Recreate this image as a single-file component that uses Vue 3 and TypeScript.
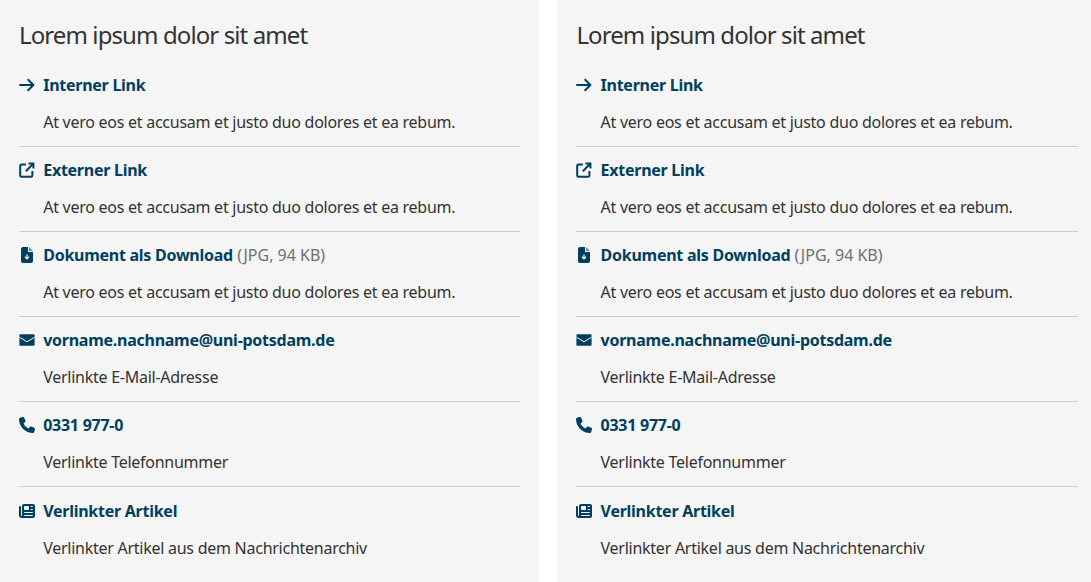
<script setup lang="ts">
interface Item { icon: string; title: string; meta?: string; desc: string }
const lorem = 'At vero eos et accusam et justo duo dolores et ea rebum.'
const items: Item[] = [
  { icon: 'arrow', title: 'Interner Link', desc: lorem },
  { icon: 'external', title: 'Externer Link', desc: lorem },
  { icon: 'file', title: 'Dokument als Download', meta: '(JPG, 94 KB)', desc: lorem },
  { icon: 'mail', title: 'vorname.nachname@uni-potsdam.de', desc: 'Verlinkte E-Mail-Adresse' },
  { icon: 'phone', title: '0331 977-0', desc: 'Verlinkte Telefonnummer' },
  { icon: 'news', title: 'Verlinkter Artikel', desc: 'Verlinkter Artikel aus dem Nachrichtenarchiv' },
]
const cards = [0, 1]
</script>

<template>
  <div class="page">
    <section v-for="c in cards" :key="c" class="card">
      <h2 class="heading">Lorem ipsum dolor sit amet</h2>
      <ul class="list">
        <li v-for="item in items" :key="item.title" class="item">
          <div class="title-row">
            <svg class="icon" viewBox="0 0 16 16" aria-hidden="true">
              <g v-if="item.icon === 'arrow'" fill="none" stroke="currentColor" stroke-width="2" stroke-linecap="round" stroke-linejoin="round">
                <path d="M1 8h13" /><path d="M9.2 2.8L14.4 8l-5.2 5.2" />
              </g>
              <g v-else-if="item.icon === 'external'" fill="none" stroke="currentColor" stroke-width="2">
                <path d="M7 2.6H2.6a1.4 1.4 0 0 0-1.4 1.4v9.4a1.4 1.4 0 0 0 1.4 1.4H12a1.4 1.4 0 0 0 1.4-1.4V9" />
                <path d="M6.8 9.2l7.4-7.4" /><path d="M9.4 1.6h5v5" />
              </g>
              <g v-else-if="item.icon === 'file'">
                <path fill="currentColor" transform="translate(2 0) scale(0.03125)" d="M0 64C0 28.7 28.7 0 64 0H224V128c0 17.7 14.3 32 32 32H384V448c0 35.3-28.7 64-64 64H64c-35.3 0-64-28.7-64-64V64z" />
                <path fill="currentColor" opacity=".6" transform="translate(2 0) scale(0.03125)" d="M384 128H256V0L384 128z" />
                <path fill="none" stroke="#f5f5f5" stroke-width="1.3" d="M8 7.4v4.4M6 9.8l2 2.1 2-2.1" />
              </g>
              <g v-else-if="item.icon === 'mail'">
                <rect fill="currentColor" x="0.4" y="2.2" width="15.2" height="11.6" rx="1.2" />
                <path fill="none" stroke="#f5f5f5" stroke-width="1" d="M0.4 5.2L8 9.8l7.6-4.6" />
              </g>
              <path v-else-if="item.icon === 'phone'" fill="currentColor" transform="scale(0.03125)" d="M164.9 24.6c-7.7-18.6-28-28.5-47.4-23.2l-88 24C12.1 30.2 0 46 0 64C0 311.4 200.6 512 448 512c18 0 33.8-12.1 38.6-29.5l24-88c5.3-19.4-4.6-39.7-23.2-47.4l-96-40c-16.3-6.8-35.2-2.1-46.3 11.6L304.7 368C234.3 334.7 177.3 277.7 144 207.3L193.3 167c13.7-11.2 18.4-30 11.6-46.3l-40-96z" />
              <path v-else fill="currentColor" transform="scale(0.03125)" d="M96 96c0-35.3 28.7-64 64-64H448c35.3 0 64 28.7 64 64V416c0 35.3-28.7 64-64 64H80c-44.2 0-80-35.8-80-80V128c0-17.7 14.3-32 32-32s32 14.3 32 32V400c0 8.8 7.2 16 16 16s16-7.2 16-16V96zm64 24v80c0 13.3 10.7 24 24 24H296c13.3 0 24-10.7 24-24V120c0-13.3-10.7-24-24-24H184c-13.3 0-24 10.7-24 24zm208-8c0 8.8 7.2 16 16 16h48c8.8 0 16-7.2 16-16s-7.2-16-16-16H384c-8.8 0-16 7.2-16 16zm0 96c0 8.8 7.2 16 16 16h48c8.8 0 16-7.2 16-16s-7.2-16-16-16H384c-8.8 0-16 7.2-16 16zM160 304c0 8.8 7.2 16 16 16H432c8.8 0 16-7.2 16-16s-7.2-16-16-16H176c-8.8 0-16 7.2-16 16zm0 96c0 8.8 7.2 16 16 16H432c8.8 0 16-7.2 16-16s-7.2-16-16-16H176c-8.8 0-16 7.2-16 16z" />
            </svg>
            <a class="link">{{ item.title }}</a>
            <span v-if="item.meta" class="meta">{{ item.meta }}</span>
          </div>
          <p class="desc">{{ item.desc }}</p>
        </li>
      </ul>
    </section>
  </div>
</template>

<style>
html, body { margin: 0; background: #fff; overflow: hidden; }
</style>

<style scoped>
.page {
  display: grid;
  grid-template-columns: 539.4px 539.4px;
  column-gap: 18px;
  width: 1091px;
  height: 582px;
  overflow: hidden;
  font-family: "Noto Sans", sans-serif;
  color: #333;
}
.card {
  background: #f5f5f5;
  padding: 15px 19px 0;
  box-sizing: border-box;
  height: 582px;
}
.heading {
  margin: 0;
  font-size: 24px;
  line-height: 40px;
  font-weight: 400;
  color: #333;
  letter-spacing: -0.9px;
}
.list {
  list-style: none;
  margin: 6.88px 0 0;
  padding: 0;
}
.item {
  padding-top: 8.12px;
  padding-bottom: 10px;
  border-bottom: 1px solid #ccc;
}
.item:last-child { border-bottom: 0; }
.title-row {
  display: flex;
  align-items: center;
  height: 30px;
  font-size: 16px;
  line-height: 30px;
}
.icon {
  width: 16px;
  height: 16px;
  margin-right: 8.2px;
  flex: none;
  color: #00405f;
}
.link {
  font-weight: 700;
  color: #00405f;
  letter-spacing: -0.26px;
}
.meta {
  margin-left: 4.3px;
  font-size: 16px;
  color: #6f6f6f;
}
.desc {
  margin: 8px 0 0 24.2px;
  font-size: 16px;
  line-height: 28px;
  letter-spacing: -0.26px;
}
</style>
